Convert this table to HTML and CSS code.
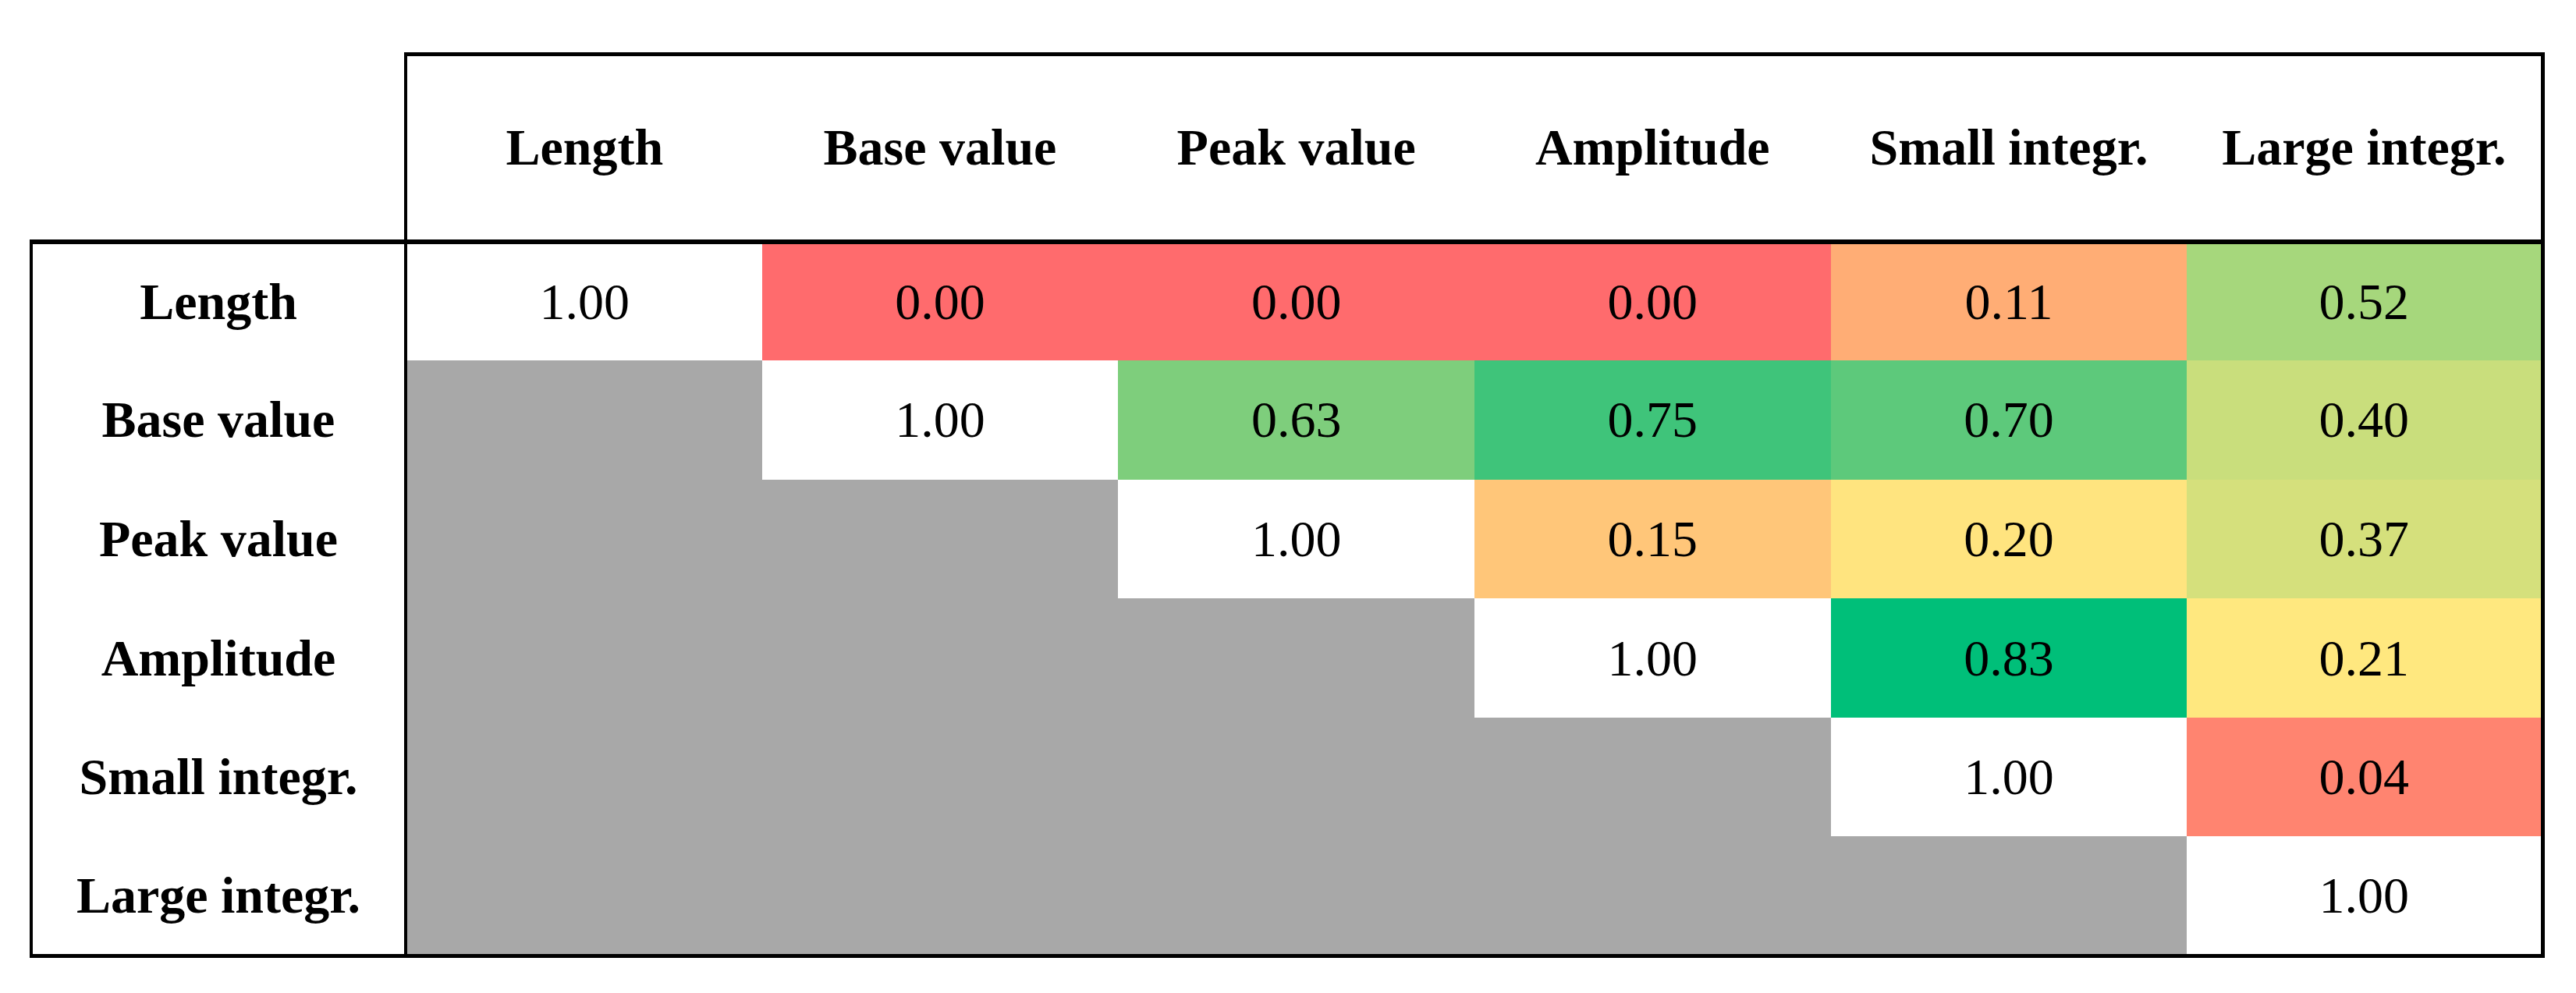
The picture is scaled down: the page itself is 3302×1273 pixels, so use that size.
FILE: index.html
```html
<!DOCTYPE html>
<html lang="en">
<head>
<meta charset="utf-8">
<title>Correlation matrix</title>
<link rel="stylesheet" href="styles.css">
</head>
<body>
<table class="matrix">
  <colgroup>
    <col class="col-label">
    <col class="col-data"><col class="col-data"><col class="col-data">
    <col class="col-data"><col class="col-data"><col class="col-data">
  </colgroup>
  <thead>
    <tr>
      <th class="corner"></th>
      <th class="first">Length</th>
      <th>Base value</th>
      <th>Peak value</th>
      <th>Amplitude</th>
      <th>Small integr.</th>
      <th class="last">Large integr.</th>
    </tr>
  </thead>
  <tbody>
    <tr>
      <th>Length</th>
      <td class="diag">1.00</td>
      <td class="c000">0.00</td>
      <td class="c000">0.00</td>
      <td class="c000">0.00</td>
      <td class="c011">0.11</td>
      <td class="c052 last">0.52</td>
    </tr>
    <tr>
      <th>Base value</th>
      <td class="na"></td>
      <td class="diag">1.00</td>
      <td class="c063">0.63</td>
      <td class="c075">0.75</td>
      <td class="c070">0.70</td>
      <td class="c040 last">0.40</td>
    </tr>
    <tr>
      <th>Peak value</th>
      <td class="na"></td>
      <td class="na"></td>
      <td class="diag">1.00</td>
      <td class="c015">0.15</td>
      <td class="c020">0.20</td>
      <td class="c037 last">0.37</td>
    </tr>
    <tr>
      <th>Amplitude</th>
      <td class="na"></td>
      <td class="na"></td>
      <td class="na"></td>
      <td class="diag">1.00</td>
      <td class="c083">0.83</td>
      <td class="c021 last">0.21</td>
    </tr>
    <tr>
      <th>Small integr.</th>
      <td class="na"></td>
      <td class="na"></td>
      <td class="na"></td>
      <td class="na"></td>
      <td class="diag">1.00</td>
      <td class="c004 last">0.04</td>
    </tr>
    <tr>
      <th>Large integr.</th>
      <td class="na"></td>
      <td class="na"></td>
      <td class="na"></td>
      <td class="na"></td>
      <td class="na"></td>
      <td class="diag last">1.00</td>
    </tr>
  </tbody>
</table>
</body>
</html>
```
FILE: styles.css
```css
html, body {
  margin: 0;
  padding: 0;
  background: #ffffff;
}

body {
  padding: 67px 0 0 38px;
  font-family: "Liberation Serif", "Times New Roman", serif;
  color: #000;
}

.matrix {
  border-collapse: collapse;
  table-layout: fixed;
  width: 3220px;
  font-size: 66px;
}

.col-label { width: 480px; }
.col-data { width: 456.67px; }

.matrix th,
.matrix td {
  padding: 0;
  text-align: center;
  vertical-align: middle;
  white-space: nowrap;
}

.matrix th {
  font-weight: bold;
}

.matrix td {
  font-weight: normal;
}

/* header */
.matrix thead tr {
  height: 240px;
}

.matrix thead th {
  border-top: 5px solid #000;
  border-bottom: 6px solid #000;
}

.matrix thead th.corner {
  border: none;
}

.matrix thead th.first {
  border-left: 4px solid #000;
}

.matrix thead th.last {
  border-right: 5px solid #000;
}

/* body */
.matrix tbody tr {
  height: 152.6px;
}

.matrix tbody th {
  border-left: 4px solid #000;
  border-right: 4px solid #000;
  background: #fff;
}

.matrix tbody tr:first-child th {
  border-top: 6px solid #000;
}

.matrix tbody tr:last-child th,
.matrix tbody tr:last-child td {
  border-bottom: 5px solid #000;
}

.matrix td.last {
  border-right: 5px solid #000;
}

.diag { background: #ffffff; }
.na   { background: #a8a8a8; }

.c000 { background: #ff6b6d; }
.c004 { background: #ff8470; }
.c011 { background: #ffad75; }
.c015 { background: #ffc679; }
.c020 { background: #ffe47f; }
.c021 { background: #ffe87f; }
.c037 { background: #d5e07c; }
.c040 { background: #c9de7c; }
.c052 { background: #a6d77c; }
.c063 { background: #7ece7c; }
.c070 { background: #5dc97b; }
.c075 { background: #3fc47a; }
.c083 { background: #00bf79; }
```
